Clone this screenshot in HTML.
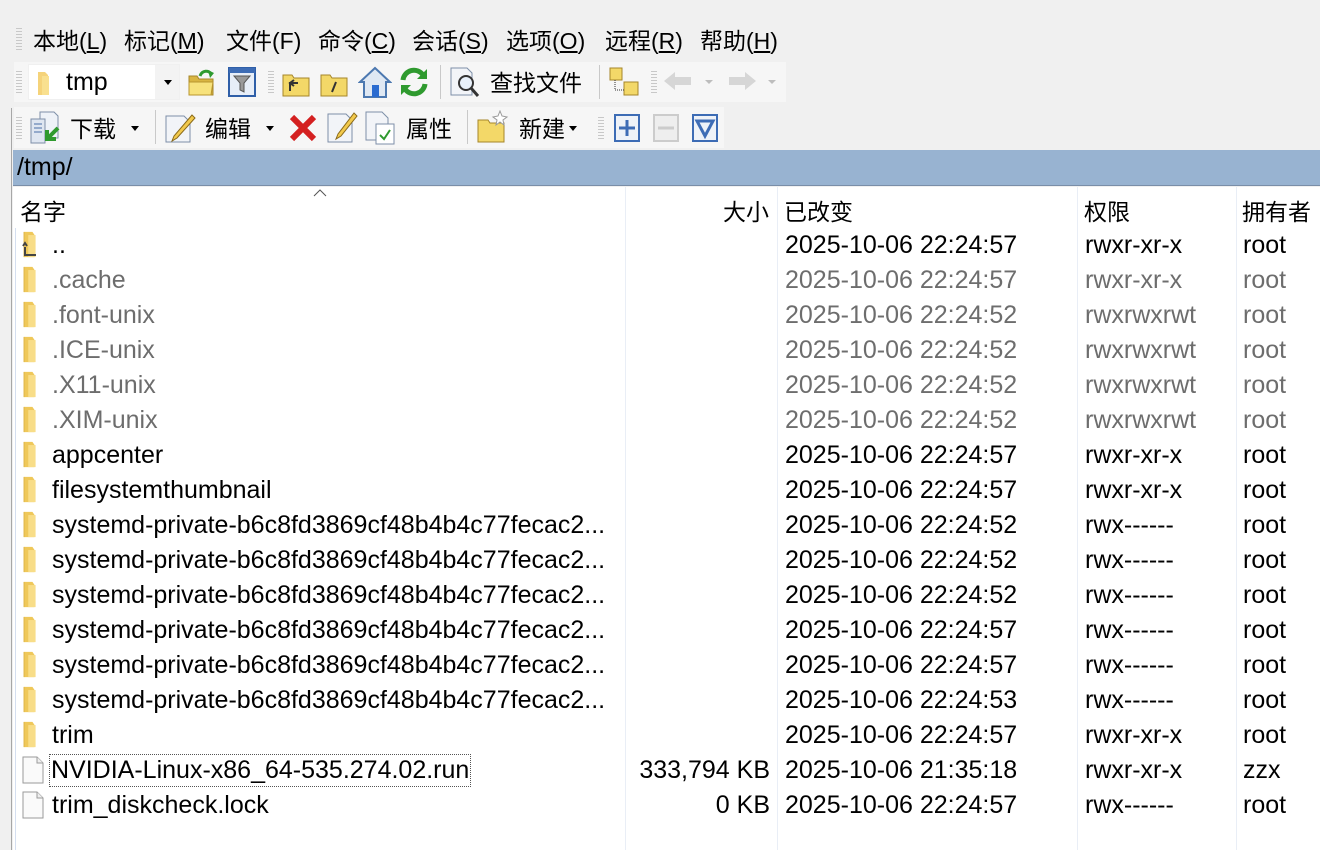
<!DOCTYPE html>
<html><head><meta charset="utf-8"><style>
*{margin:0;padding:0;box-sizing:border-box}
body{width:1320px;height:850px;background:#f0f0f0;font-family:"Liberation Sans","Noto Sans CJK SC",sans-serif;position:relative;overflow:hidden;color:#000}
.a{position:absolute;white-space:nowrap}
.menu{font-size:23px;top:22px}
.tb{position:absolute;background:#f6f6f6;height:40px}
.grip{position:absolute;width:6px;height:22px;background:repeating-linear-gradient(#c8c8c8 0 1px,transparent 1px 3px)}
.sep{position:absolute;width:1px;height:34px;background:#c9c9c9}
.t{font-size:23px}
.row{position:absolute;left:13px;width:1307px;height:35px;font-size:25px}
.row span{position:absolute;top:4px;white-space:nowrap}
.g{color:#6d6d6d}
.vl{position:absolute;top:187px;bottom:0;width:1px;background:#e9eef6}
</style></head><body>
<!-- menu -->
<div class="grip" style="left:16px;top:28px"></div>
<div class="a menu" style="left:33px">本地(<u>L</u>)</div>
<div class="a menu" style="left:124px">标记(<u>M</u>)</div>
<div class="a menu" style="left:226px">文件(F)</div>
<div class="a menu" style="left:318px">命令(<u>C</u>)</div>
<div class="a menu" style="left:412px">会话(<u>S</u>)</div>
<div class="a menu" style="left:506px">选项(<u>O</u>)</div>
<div class="a menu" style="left:605px">远程(<u>R</u>)</div>
<div class="a menu" style="left:700px">帮助(<u>H</u>)</div>

<!-- toolbar 1 -->
<div class="tb" style="left:14px;top:62px;width:772px"></div>
<div class="grip" style="left:16px;top:71px"></div>
<div class="a" style="left:28px;top:64px;width:152px;height:36px;background:#fff;border:1px solid #f0f0f0"></div>
<div class="a" style="left:155px;top:65px;width:24px;height:34px;background:#f3f3f3"></div>
<svg class="a" style="left:36px;top:70px" width="18" height="26"><path d="M2 2h7l3 3v20H2z" fill="#f5d37a"/><path d="M6 6h7v19H6z" fill="#f9e08f"/></svg>
<div class="a t" style="left:66px;top:68px;font-size:25px">tmp</div>
<div class="a" style="left:164px;top:80px;border:4px solid transparent;border-top:5px solid #000"></div>
<svg class="a" style="left:186px;top:66px" width="32" height="32"><path d="M3 10h8l2 3h14v16H3z" fill="#d9b541" stroke="#a6862a"/><path d="M3 16h24l-2 13H3z" fill="#f7e27c" stroke="#b8952e"/><path d="M14 10c2-6 9-6 11-2" stroke="#2f9a2f" stroke-width="3" fill="none"/><path d="M22 4l6 3-4 5z" fill="#2f9a2f"/></svg>
<svg class="a" style="left:228px;top:67px" width="28" height="30"><rect x="1" y="1" width="26" height="28" fill="#e7eef8" stroke="#2f5fa8" stroke-width="2"/><rect x="1" y="1" width="26" height="5" fill="#3d6cb5"/><path d="M6 9h16l-6 7v9l-4-2v-7z" fill="#999" stroke="#555"/></svg>
<div class="grip" style="left:268px;top:71px"></div>
<svg class="a" style="left:282px;top:69px" width="28" height="28"><path d="M1 6h9l2 3h15v18H1z" fill="#f3d868" stroke="#a6862a"/><path d="M8 22V14h8M12 11l-4 3 4 3" stroke="#333" stroke-width="2" fill="none"/></svg>
<svg class="a" style="left:320px;top:69px" width="28" height="28"><path d="M1 6h9l2 3h15v18H1z" fill="#f3d868" stroke="#a6862a"/><path d="M16 13l-4 10" stroke="#333" stroke-width="2"/></svg>
<svg class="a" style="left:358px;top:66px" width="34" height="32"><path d="M17 2L2 16h4v15h22V16h4z" fill="#dfe8f3" stroke="#4c78b0" stroke-width="2"/><rect x="14" y="19" width="7" height="12" fill="#2a6bd0"/></svg>
<svg class="a" style="left:398px;top:66px" width="32" height="32"><path d="M5 14a11 11 0 0 1 20-5" stroke="#2f9a2f" stroke-width="5" fill="none"/><path d="M29 3v10h-10z" fill="#2f9a2f"/><path d="M27 18a11 11 0 0 1-20 5" stroke="#2f9a2f" stroke-width="5" fill="none"/><path d="M3 29V19h10z" fill="#2f9a2f"/></svg>
<div class="sep" style="left:440px;top:65px"></div>
<svg class="a" style="left:449px;top:66px" width="34" height="32"><path d="M2 2h16l5 5v22H2z" fill="#f2f4f8" stroke="#7d8fa8"/><circle cx="17" cy="17" r="7" fill="#e8f0fa" stroke="#333" stroke-width="2"/><path d="M22 22l7 8" stroke="#333" stroke-width="3"/></svg>
<div class="a t" style="left:490px;top:64px">查找文件</div>
<div class="sep" style="left:599px;top:65px"></div>
<svg class="a" style="left:608px;top:66px" width="32" height="32"><rect x="2" y="2" width="12" height="12" fill="#f3d868" stroke="#a6862a"/><rect x="16" y="16" width="14" height="13" fill="#f3d868" stroke="#a6862a"/><path d="M7 14v10h9" stroke="#333" stroke-dasharray="1 1" fill="none"/></svg>
<div class="grip" style="left:651px;top:71px"></div>
<svg class="a" style="left:662px;top:70px" width="32" height="22"><path d="M2 11L13 2v5h16v8H13v5z" fill="#d6d6d6"/></svg>
<div class="a" style="left:705px;top:80px;border:4px solid transparent;border-top:4px solid #bdbdbd"></div>
<svg class="a" style="left:726px;top:70px" width="32" height="22"><path d="M30 11L19 2v5H3v8h16v5z" fill="#d6d6d6"/></svg>
<div class="a" style="left:768px;top:80px;border:4px solid transparent;border-top:4px solid #bdbdbd"></div>

<!-- toolbar 2 -->
<div class="tb" style="left:14px;top:107px;width:710px;height:41px"></div>
<div class="a" style="left:0;top:108px;width:12px;height:742px;background:#f0f0f0;border-right:1px solid #a7a7a7"></div>
<div class="grip" style="left:16px;top:117px"></div>
<svg class="a" style="left:28px;top:110px" width="36" height="36"><path d="M12 2h14l4 4v22H12z" fill="#eef2f8" stroke="#7d8fa8"/><path d="M3 9h14v24H3z" fill="#dfe6f1" stroke="#7d8fa8"/><path d="M6 14h8M6 18h8M6 22h8" stroke="#4a6fa8"/><path d="M30 18L20 28M19 20v9h9" stroke="#2f9a2f" stroke-width="4" fill="none"/></svg>
<div class="a t" style="left:70px;top:110px">下载</div>
<div class="a" style="left:131px;top:126px;border:4px solid transparent;border-top:5px solid #000"></div>
<div class="sep" style="left:155px;top:110px"></div>
<svg class="a" style="left:164px;top:112px" width="32" height="32"><path d="M2 4h18l6 6v20H2z" fill="#f2f4f8" stroke="#7d8fa8"/><path d="M28 3L10 24l-2 5 5-3L31 6z" fill="#f2c94c" stroke="#8a6a1a"/></svg>
<div class="a t" style="left:205px;top:110px">编辑</div>
<div class="a" style="left:266px;top:126px;border:4px solid transparent;border-top:5px solid #000"></div>
<svg class="a" style="left:288px;top:113px" width="30" height="30"><path d="M4 4l22 22M26 4L4 26" stroke="#d42020" stroke-width="6"/></svg>
<svg class="a" style="left:326px;top:110px" width="32" height="34"><path d="M2 4h18l6 6v22H2z" fill="#f2f4f8" stroke="#7d8fa8"/><path d="M28 3L12 24l-2 5 5-3L31 6z" fill="#f2c94c" stroke="#8a6a1a"/></svg>
<svg class="a" style="left:364px;top:110px" width="34" height="36"><path d="M2 2h16l6 6v22H2z" fill="#f2f4f8" stroke="#7d8fa8"/><rect x="12" y="14" width="18" height="20" fill="#fff" stroke="#7d8fa8"/><path d="M16 25l4 4 6-9" stroke="#2f9a2f" stroke-width="2" fill="none"/></svg>
<div class="a t" style="left:406px;top:110px">属性</div>
<div class="sep" style="left:467px;top:110px"></div>
<svg class="a" style="left:476px;top:110px" width="34" height="34"><path d="M2 10h10l2 3h14v19H2z" fill="#f3d868" stroke="#a6862a"/><path d="M24 1l2 5 5 1-4 3 1 5-4-3-4 3 1-5-4-3 5-1z" fill="#fff" stroke="#999"/></svg>
<div class="a t" style="left:519px;top:110px">新建</div>
<div class="a" style="left:569px;top:126px;border:4px solid transparent;border-top:5px solid #000"></div>
<div class="grip" style="left:598px;top:117px"></div>
<svg class="a" style="left:614px;top:114px" width="26" height="28"><rect x="1" y="1" width="24" height="26" fill="#eef2f8" stroke="#3d6cb5" stroke-width="2"/><path d="M13 6v16M5 14h16" stroke="#3d6cb5" stroke-width="3"/></svg>
<svg class="a" style="left:653px;top:114px" width="26" height="28"><rect x="1" y="1" width="24" height="26" fill="#eee" stroke="#ccc" stroke-width="2"/><path d="M5 14h16" stroke="#ccc" stroke-width="3"/></svg>
<svg class="a" style="left:692px;top:114px" width="26" height="28"><rect x="1" y="1" width="24" height="26" fill="#eef2f8" stroke="#3d6cb5" stroke-width="2"/><path d="M5 7h16l-8 15z" fill="none" stroke="#3d6cb5" stroke-width="3"/></svg>

<!-- path bar -->
<div class="a" style="left:13px;top:150px;width:1307px;height:36px;background:#98b3d1;border-bottom:1px solid #7a8ea8"></div>
<div class="a" style="left:17px;top:153px;font-size:25px">/tmp/</div>

<!-- list -->
<div class="a" style="left:13px;top:187px;width:1307px;height:663px;background:#fff"></div>
<div class="vl" style="left:625px"></div>
<div class="vl" style="left:777px"></div>
<div class="vl" style="left:1077px"></div>
<div class="vl" style="left:1236px"></div>
<div class="vl" style="left:15px;top:228px;background:#d5dff0"></div>
<svg class="a" style="left:312px;top:188px" width="16" height="10"><path d="M2 8l6-6 6 6" stroke="#555" fill="none"/></svg>
<div class="a" style="left:20px;top:193px;font-size:23px">名字</div>
<div class="a" style="left:723px;top:193px;font-size:23px">大小</div>
<div class="a" style="left:784px;top:193px;font-size:23px">已改变</div>
<div class="a" style="left:1084px;top:193px;font-size:23px">权限</div>
<div class="a" style="left:1242px;top:193px;font-size:23px">拥有者</div>

<div id="rows"></div>
<svg width="0" height="0" style="position:absolute"><defs>
<symbol id="fd" viewBox="0 0 20 26"><path d="M1 1h8l2 3v21H1z" fill="#efc85a"/><path d="M5 4h7v21H5z" fill="#f8dd88"/><path d="M1 25V1" stroke="#e0b74a"/></symbol>
<symbol id="fl" viewBox="0 0 22 28"><path d="M1 1h14l6 6v20H1z" fill="#fafafa" stroke="#9a9a9a"/><path d="M15 1v6h6" fill="#eee" stroke="#9a9a9a"/></symbol>
</defs></svg>
<script>
var R=[["..","2025-10-06 22:24:57","rwxr-xr-x","root",0,"",1],
[".cache","2025-10-06 22:24:57","rwxr-xr-x","root",1],
[".font-unix","2025-10-06 22:24:52","rwxrwxrwt","root",1],
[".ICE-unix","2025-10-06 22:24:52","rwxrwxrwt","root",1],
[".X11-unix","2025-10-06 22:24:52","rwxrwxrwt","root",1],
[".XIM-unix","2025-10-06 22:24:52","rwxrwxrwt","root",1],
["appcenter","2025-10-06 22:24:57","rwxr-xr-x","root",0],
["filesystemthumbnail","2025-10-06 22:24:57","rwxr-xr-x","root",0],
["systemd-private-b6c8fd3869cf48b4b4c77fecac2...","2025-10-06 22:24:52","rwx------","root",0],
["systemd-private-b6c8fd3869cf48b4b4c77fecac2...","2025-10-06 22:24:52","rwx------","root",0],
["systemd-private-b6c8fd3869cf48b4b4c77fecac2...","2025-10-06 22:24:52","rwx------","root",0],
["systemd-private-b6c8fd3869cf48b4b4c77fecac2...","2025-10-06 22:24:57","rwx------","root",0],
["systemd-private-b6c8fd3869cf48b4b4c77fecac2...","2025-10-06 22:24:57","rwx------","root",0],
["systemd-private-b6c8fd3869cf48b4b4c77fecac2...","2025-10-06 22:24:53","rwx------","root",0],
["trim","2025-10-06 22:24:57","rwxr-xr-x","root",0],
["NVIDIA-Linux-x86_64-535.274.02.run","2025-10-06 21:35:18","rwxr-xr-x","zzx",0,"333,794 KB",2],
["trim_diskcheck.lock","2025-10-06 22:24:57","rwx------","root",0,"0 KB",2]];
var h="";R.forEach(function(r,i){var top=227+i*35,c=r[4]?' class="g"':'';var ic=r[6]==2?'<svg style="position:absolute;left:9px;top:4px" width="22" height="28"><use href="#fl"/></svg>':'<svg style="position:absolute;left:10px;top:3px" width="21" height="29"><use href="#fd"/></svg>';
if(r[6]==1)ic+='<svg style="position:absolute;left:9px;top:14px" width="16" height="16"><path d="M3 6v8h11M1 5l2-3 2 3" stroke="#444" stroke-width="2" fill="none"/></svg>';
var nm=i==15?'<span style="left:38px;outline:1px dotted #555;outline-offset:1px">'+r[0]+'</span>':'<span'+c+' style="left:39px">'+r[0]+'</span>';
h+='<div class="row" style="top:'+top+'px">'+ic+nm+(r[5]?'<span style="right:550px">'+r[5]+'</span>':'')+'<span'+c+' style="left:772px">'+r[1]+'</span><span'+c+' style="left:1072px">'+r[2]+'</span><span'+c+' style="left:1230px">'+r[3]+'</span></div>';});
document.getElementById("rows").innerHTML=h;
</script>
</body></html>
